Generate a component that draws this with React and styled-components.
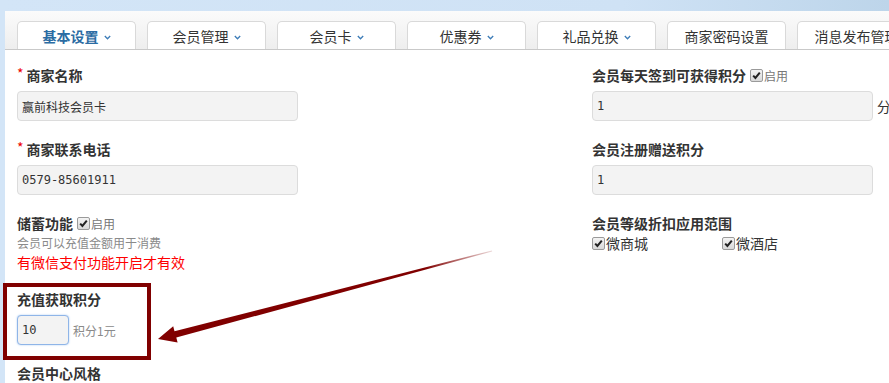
import styled, { createGlobalStyle } from 'styled-components';

const GlobalStyle = createGlobalStyle`
  html, body {
    margin: 0;
    padding: 0;
    background: linear-gradient(90deg, #d3e5f7 0%, #cfe2f5 70%, #bdd5ea 100%);
    overflow: hidden;
  }
  body {
    font-family: "Liberation Sans", "Noto Sans CJK SC", sans-serif;
    color: #333;
  }
`;

const Page = styled.div`
  position: relative;
  width: 889px;
  height: 383px;
  padding: 11px 0 0 5px;
  box-sizing: border-box;
  overflow: hidden;
`;

const Panel = styled.div`
  background: #fff;
  width: 900px;
  height: 400px;
  border-top-left-radius: 2px;
`;

const TabBar = styled.div`
  display: flex;
  gap: 11px;
  height: 39px;
  padding: 11px 0 0 12px;
  box-sizing: border-box;
  background: linear-gradient(#fbfbfb, #eeeeee);
  border-bottom: 1px solid #c9c9c9;
  align-items: flex-end;
`;

const Tab = styled.div`
  flex: 0 0 119px;
  height: 28px;
  box-sizing: border-box;
  border: 1px solid #d9d9d9;
  border-bottom: none;
  border-radius: 5px 5px 0 0;
  background: #fff;
  display: flex;
  align-items: center;
  justify-content: center;
  gap: 5px;
  font-family: "Noto Sans CJK SC", sans-serif;
  font-size: 14px;
  line-height: 18px;
  color: ${(p) => (p.$active ? '#2b6ca3' : '#333')};
  font-weight: ${(p) => (p.$active ? 'bold' : 'normal')};
  white-space: nowrap;
  overflow: hidden;

  svg {
    margin-top: 3px;
  }
`;

const Chevron = () => (
  <svg width="7" height="5" viewBox="0 0 7 5">
    <path d="M0.8 1 L3.5 3.8 L6.2 1" fill="none" stroke="#3d7db8" strokeWidth="1.3" />
  </svg>
);

const Content = styled.div`
  display: grid;
  grid-template-columns: 575px 320px;
  padding: 15px 0 0 12px;
`;

const Column = styled.div`
  display: flex;
  flex-direction: column;
  gap: 18px;
`;

const Group = styled.div`
  position: relative;
  display: flex;
  flex-direction: column;
`;

const Label = styled.div`
  display: flex;
  align-items: center;
  height: 20px;
  font-family: "Noto Sans CJK SC", sans-serif;
  font-size: 14px;
  font-weight: bold;
  color: #333;
  margin-bottom: ${(p) => (p.$tight ? '0' : '6px')};
  white-space: nowrap;
`;

const Star = styled.span`
  color: #e00;
  font-weight: normal;
  font-size: 14px;
  margin-right: 3px;
  align-self: flex-start;
  line-height: 16px;
`;

const Field = styled.div`
  display: flex;
  align-items: center;
  gap: 4px;
`;

const Input = styled.div`
  width: ${(p) => p.$w || 281}px;
  height: 30px;
  box-sizing: border-box;
  border: 1px solid ${(p) => (p.$focus ? '#8fb5e8' : '#dcdcdc')};
  box-shadow: ${(p) => (p.$focus ? '0 0 2px #a8c8f0' : 'none')};
  border-radius: 4px;
  background: #f3f3f3;
  padding: 0 4px;
  display: flex;
  align-items: center;
  font-family: "DejaVu Sans Mono", "Noto Sans CJK SC", monospace;
  font-size: 12px;
  color: #333;
`;

const Unit = styled.span`
  font-family: "Noto Sans CJK SC", sans-serif;
  font-size: ${(p) => (p.$small ? '12px' : '14px')};
  color: ${(p) => (p.$muted ? '#8a8a8a' : '#333')};
`;

const Note = styled.div`
  height: 19px;
  display: flex;
  align-items: center;
  font-family: "Noto Sans CJK SC", sans-serif;
  font-size: ${(p) => (p.$warn ? '14px' : '12px')};
  color: ${(p) => (p.$warn ? '#f00' : '#8a8a8a')};
  white-space: nowrap;
`;

const CheckLabel = styled.span`
  display: inline-flex;
  align-items: center;
  margin-left: ${(p) => (p.$inline ? '4px' : '0')};
  font-family: "Noto Sans CJK SC", sans-serif;
  font-weight: normal;
  font-size: ${(p) => (p.$small ? '12px' : '14px')};
  color: ${(p) => (p.$small ? '#777' : '#333')};
`;

const Box = styled.span`
  width: 11px;
  height: 11px;
  border: 1px solid #9a9a9a;
  border-radius: 2px;
  background: linear-gradient(#f4f4f4, #d8d8d8);
  display: inline-flex;
  align-items: center;
  justify-content: center;
  margin-right: 1px;
`;

const Check = ({ children, small, inline }) => (
  <CheckLabel $small={small} $inline={inline}>
    <Box>
      <svg width="9" height="9" viewBox="0 0 9 9">
        <path d="M1.2 4.6 L3.4 7 L7.8 1.6" fill="none" stroke="#222" strokeWidth="2" />
      </svg>
    </Box>
    {children}
  </CheckLabel>
);

const CheckRow = styled.div`
  display: grid;
  grid-template-columns: 130px 130px;
  height: 19px;
  align-items: center;
`;

const Highlight = styled.div`
  position: absolute;
  left: -14px;
  top: -6px;
  width: 148px;
  height: 77px;
  box-sizing: border-box;
  border: 4px solid #800000;
  pointer-events: none;
`;

const Overlay = styled.svg`
  position: absolute;
  left: 0;
  top: 0;
  pointer-events: none;
`;

const tabs = [
  { name: '基本设置', menu: true, active: true },
  { name: '会员管理', menu: true },
  { name: '会员卡', menu: true },
  { name: '优惠券', menu: true },
  { name: '礼品兑换', menu: true },
  { name: '商家密码设置' },
  { name: '消息发布管理' },
];

export default function App() {
  return (
    <>
      <GlobalStyle />
      <Page>
        <Panel>
          <TabBar>
            {tabs.map((t) => (
              <Tab key={t.name} $active={t.active}>
                {t.name}
                {t.menu && <Chevron />}
              </Tab>
            ))}
          </TabBar>

          <Content>
            <Column>
              <Group>
                <Label><Star>*</Star>商家名称</Label>
                <Input>赢前科技会员卡</Input>
              </Group>
              <Group>
                <Label><Star>*</Star>商家联系电话</Label>
                <Input>0579-85601911</Input>
              </Group>
              <Group>
                <Label $tight>储蓄功能<Check small inline>启用</Check></Label>
                <Note>会员可以充值金额用于消费</Note>
                <Note $warn>有微信支付功能开启才有效</Note>
              </Group>
              <Group>
                <Label>充值获取积分</Label>
                <Field>
                  <Input $w={52} $focus>10</Input>
                  <Unit $small $muted>积分1元</Unit>
                </Field>
                <Highlight />
              </Group>
              <Group>
                <Label>会员中心风格</Label>
              </Group>
            </Column>

            <Column>
              <Group>
                <Label>会员每天签到可获得积分<Check small inline>启用</Check></Label>
                <Field>
                  <Input>1</Input>
                  <Unit>分</Unit>
                </Field>
              </Group>
              <Group>
                <Label>会员注册赠送积分</Label>
                <Input>1</Input>
              </Group>
              <Group>
                <Label $tight>会员等级折扣应用范围</Label>
                <CheckRow>
                  <Check>微商城</Check>
                  <Check>微酒店</Check>
                </CheckRow>
              </Group>
            </Column>
          </Content>
        </Panel>

        <Overlay width="889" height="383" viewBox="0 0 889 383">
          <defs>
            <linearGradient id="fade" x1="158" y1="339" x2="492" y2="251" gradientUnits="userSpaceOnUse">
              <stop offset="0.8" stopColor="#800000" />
              <stop offset="1" stopColor="#800000" stopOpacity="0.15" />
            </linearGradient>
          </defs>
          <polygon
            fill="url(#fade)"
            points="158,339 177.6,342.6 176.3,337.6 492.2,251.4 491.9,250.4 174.5,331.2 173.2,326.3"
          />
        </Overlay>
      </Page>
    </>
  );
}
